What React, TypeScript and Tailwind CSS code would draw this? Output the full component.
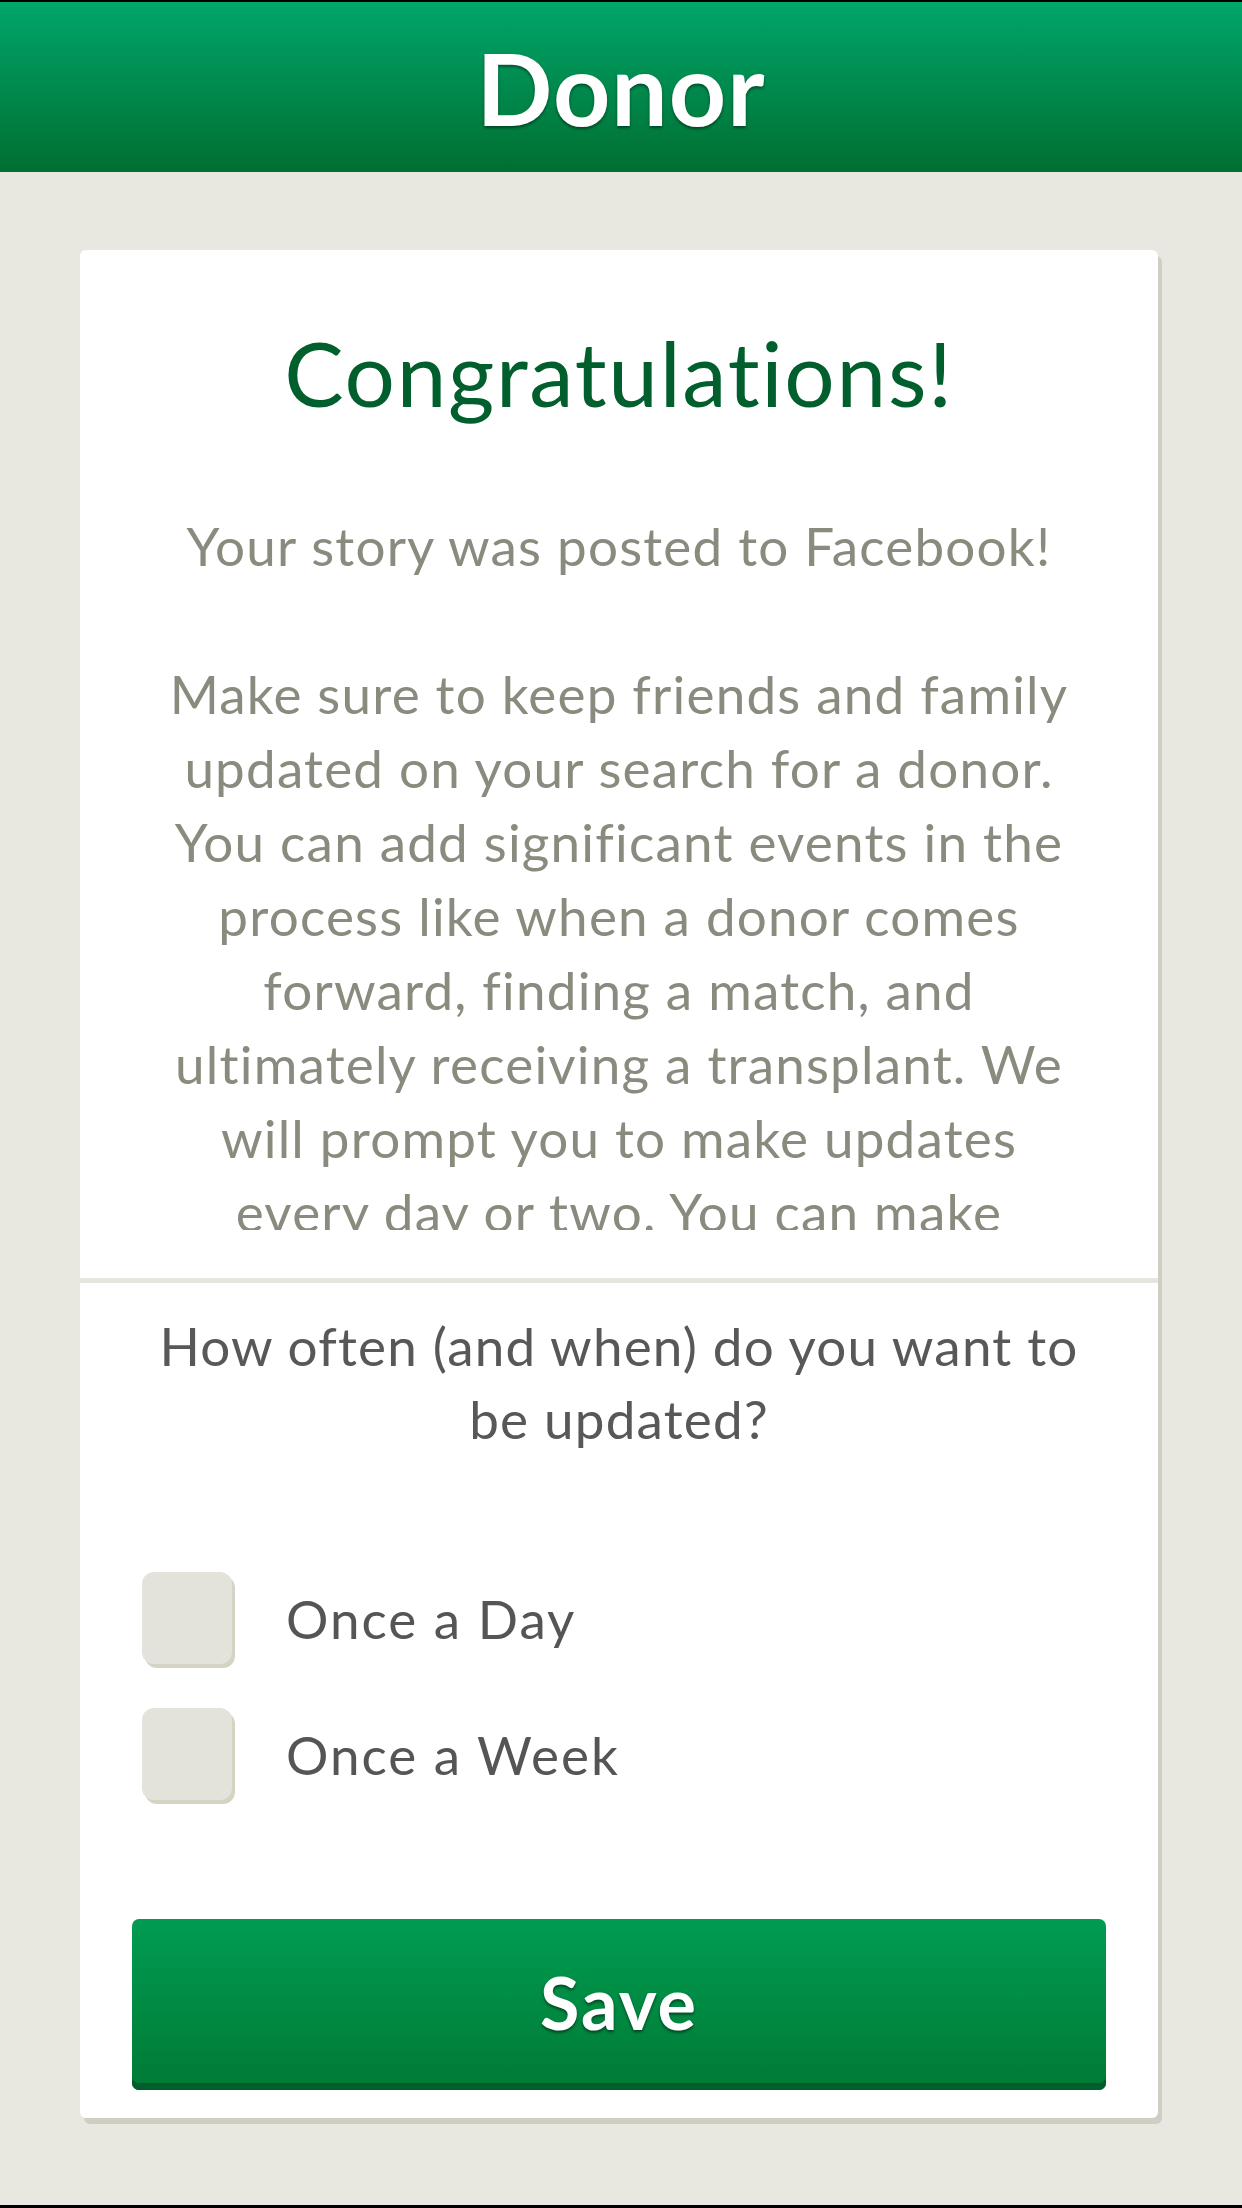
import { useState } from "react";

const storyLines = [
  "Make sure to keep friends and family",
  "updated on your search for a donor.",
  "You can add significant events in the",
  "process like when a donor comes",
  "forward, finding a match, and",
  "ultimately receiving a transplant. We",
  "will prompt you to make updates",
  "every day or two. You can make",
  "changes to this at any time.",
];

const options = ["Once a Day", "Once a Week"];

function Checkbox({ label, checked, onToggle }: { label: string; checked: boolean; onToggle: () => void }) {
  return (
    <button type="button" onClick={onToggle} className="flex h-[96px] items-center gap-[54px] text-left">
      <span className="flex h-[92px] w-[90px] items-center justify-center rounded-[12px] bg-[#e3e3dc] shadow-[3px_4px_0_#d4d3c4]">
        {checked && <span className="text-[56px] leading-none text-[#00853f]">✓</span>}
      </span>
      <span className="text-[53px] leading-none tracking-[2px] text-[#555555]">{label}</span>
    </button>
  );
}

export default function App() {
  const [selected, setSelected] = useState<string | null>(null);

  return (
    <div className="flex min-h-[2208px] w-[1242px] flex-col bg-[#e8e7e0] font-['Lato','Liberation_Sans',sans-serif]">
      <div className="h-[2px] bg-black" />
      <header className="flex h-[170px] items-center justify-center bg-linear-to-b from-[#00a66b] to-[#006f31]">
        <h1 className="text-[100px] font-bold leading-none tracking-[1px] text-white [text-shadow:0_2px_3px_rgba(0,0,0,0.45)]">
          Donor
        </h1>
      </header>

      <main className="flex-1 pl-[80px] pt-[78px]">
        <div className="w-[1078px] rounded-[6px] shadow-[4px_6px_0_#cfcec5]">
          <section className="flex h-[1028px] flex-col items-center rounded-t-[6px] bg-white pt-[73px]">
            <h2 className="text-[89px] leading-[100px] tracking-[1.7px] text-[#005f2c]">Congratulations!</h2>
            <div className="mt-[86px] h-[721px] overflow-hidden text-center text-[53px] leading-[74px] tracking-[1.2px] text-[#8a8a7e]">
              <p>Your story was posted to Facebook!</p>
              <p className="mt-[74px]">
                {storyLines.map((line) => (
                  <span key={line} className="block">
                    {line}
                  </span>
                ))}
              </p>
            </div>
          </section>

          <div className="h-[5px] bg-[#e6e5de]" />

          <section className="flex h-[835px] flex-col rounded-b-[6px] bg-white pt-[26px]">
            <p className="text-center text-[53px] leading-[73px] tracking-[1.2px] text-[#58585a]">
              How often (and when) do you want to
              <br />
              be updated?
            </p>
            <div className="mt-[115px] flex flex-col gap-[40px] pl-[62px]">
              {options.map((opt) => (
                <Checkbox
                  key={opt}
                  label={opt}
                  checked={selected === opt}
                  onToggle={() => setSelected(selected === opt ? null : opt)}
                />
              ))}
            </div>
            <button
              type="button"
              className="mx-[52px] mt-[117px] flex h-[171px] items-center justify-center rounded-[7px] bg-linear-to-b from-[#009c52] to-[#007a34] pb-[6px] shadow-[inset_0_-7px_0_#005e2b]"
            >
              <span className="text-[72px] font-bold leading-none tracking-[2px] text-white [text-shadow:0_2px_3px_rgba(0,0,0,0.5)]">
                Save
              </span>
            </button>
          </section>
        </div>
      </main>

      <div className="h-[3px] bg-black" />
    </div>
  );
}
